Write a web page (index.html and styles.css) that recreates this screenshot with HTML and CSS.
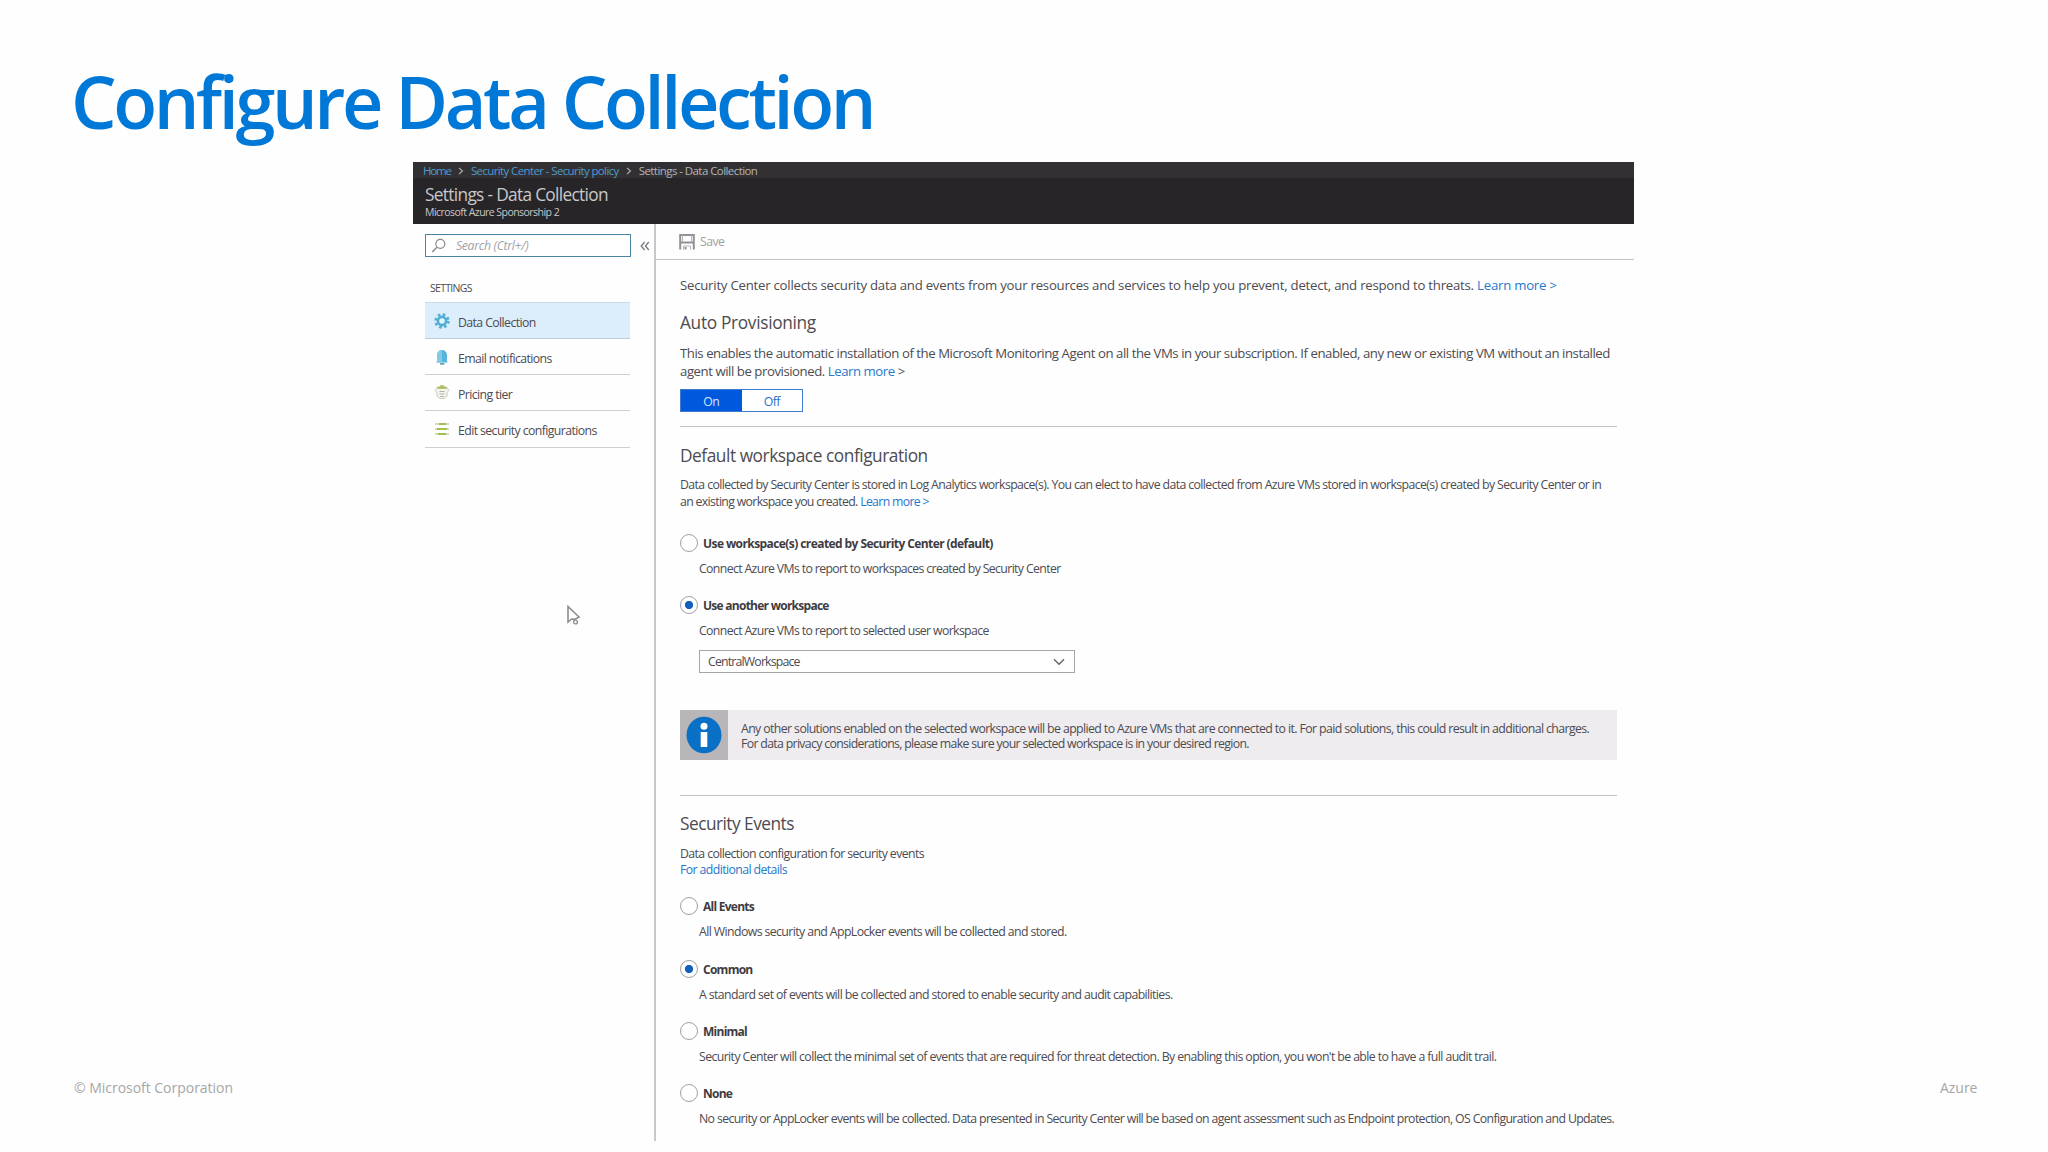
FILE: index.html
```html
<!DOCTYPE html>
<html lang="en">
<head>
    <meta charset="UTF-8">
    <meta name="viewport" content="width=device-width, initial-scale=1.0">
    <title>Configure Data Collection</title>
    <link rel="stylesheet" href="styles.css">
</head>
<body>
    <div class="slide">
        <h1 class="slide-title">Configure Data Collection</h1>
        <div class="slide-left">
            <svg class="cursor" width="16" height="22" viewBox="0 0 16 22">
                <path d="M2 1.5V17l3.6-3 3 .4L13 12z" fill="#fff" stroke="#8f8d92" stroke-width="1.6"/>
                <circle cx="9.5" cy="17" r="1.9" fill="#fff" stroke="#8f8d92" stroke-width="1.4"/>
            </svg>
            <span class="copyright">© Microsoft Corporation</span>
        </div>
        <div class="portal">
            <header class="portal-header">
                <nav class="breadcrumb">
                    <a class="crumb-home" href="#">Home</a>
                    <svg width="6" height="8" viewBox="0 0 6 8"><path d="M1 1l3.5 3L1 7" fill="none" stroke="#aaa" stroke-width="1.2"/></svg>
                    <a class="crumb-policy" href="#">Security Center - Security policy</a>
                    <svg width="6" height="8" viewBox="0 0 6 8"><path d="M1 1l3.5 3L1 7" fill="none" stroke="#aaa" stroke-width="1.2"/></svg>
                    <span>Settings - Data Collection</span>
                </nav>
                <div class="blade-title">Settings - Data Collection</div>
                <div class="blade-subtitle">Microsoft Azure Sponsorship 2</div>
            </header>
            <div class="portal-body">
                <aside class="sidebar">
                    <div class="search-row">
                        <div class="search-box">
                            <svg width="16" height="16" viewBox="0 0 16 16"><circle cx="9.3" cy="5.8" r="4.5" fill="none" stroke="#8a8a8e" stroke-width="1.2"/><path d="M6 9.2L1.2 14" stroke="#8a8a8e" stroke-width="1.5"/></svg>
                            <span>Search (Ctrl+/)</span>
                        </div>
                        <svg class="collapse" width="10" height="10" viewBox="0 0 10 10"><path d="M4.6 1L1.2 5l3.4 4M8.8 1L5.4 5l3.4 4" fill="none" stroke="#77767c" stroke-width="1.3"/></svg>
                    </div>
                    <div class="menu-heading">SETTINGS</div>
                    <ul class="menu">
                        <li class="active">
                            <svg width="16" height="16" viewBox="0 0 16 16"><circle cx="8" cy="8" r="6.4" fill="none" stroke="#52aed3" stroke-width="2.6" stroke-dasharray="2.6 2.43"/><circle cx="8" cy="8" r="4.1" fill="#e4f5fc" stroke="#4faed3" stroke-width="2.6"/></svg>
                            Data Collection
                        </li>
                        <li>
                            <svg width="16" height="16" viewBox="0 0 16 16"><path d="M3 12.5V6a5 5 0 0 1 10 0v6.5l1 1H2z" fill="#58b5da"/><path d="M8 1v12.5H3V6a5 5 0 0 1 5-5z" fill="#82cbe6"/><path d="M6 14.2h4.5v1.3H6z" fill="#3c87a8"/></svg>
                            Email notifications
                        </li>
                        <li>
                            <svg width="16" height="16" viewBox="0 0 16 16"><path d="M1 5.5L3.5 2h9L15 5.5l-2 2V11l-3 2.5H6L3 11V7.5z" fill="#f4f4ee" stroke="#c3c5b4" stroke-width=".9"/><path d="M3.5 2.8h9" stroke="#a5bd57" stroke-width="2"/><path d="M6.2 1h3.6" stroke="#a5bd57" stroke-width="1.6"/><path d="M5.5 6.5h5M5.5 9h5M6 11.5h4" stroke="#b5b4a6"/></svg>
                            Pricing tier
                        </li>
                        <li>
                            <svg width="16" height="16" viewBox="0 0 16 16"><path d="M1 3h14M1 8h14M1 13h14" stroke="#c8cfb6" stroke-width="1.6"/><path d="M5 3h7M3 8h10M4 13h8" stroke="#a0c04c" stroke-width="2.2"/></svg>
                            Edit security configurations
                        </li>
                    </ul>
                </aside>
                <main class="content">
                    <div class="toolbar">
                        <svg width="16" height="16" viewBox="0 0 16 16"><path d="M1.2 15.5V1h13.6v14.5M1.2 8.5h13.6" fill="none" stroke="#919095" stroke-width="2"/><path d="M3.5 1v7M12.5 1v7" stroke="#b5b4b9"/><path d="M4.5 15.5v-3.5h7v3.5" fill="none" stroke="#b5b4b9"/><path d="M5.5 13h2v2.5h-2z" fill="#919095"/></svg>
                        <span>Save</span>
                    </div>
                    <div class="settings">
                        <p class="intro">Security Center collects security data and events from your resources and services to help you prevent, detect, and respond to threats. <a href="#">Learn more &gt;</a></p>

                        <h2 class="h-auto">Auto Provisioning</h2>
                        <p class="auto-text">This enables the automatic installation of the Microsoft Monitoring Agent on all the VMs in your subscription. If enabled, any new or existing VM without an installed<br>agent will be provisioned. <a href="#">Learn more</a> &gt;</p>
                        <div class="toggle">
                            <span class="on">On</span>
                            <span>Off</span>
                        </div>
                        <hr>

                        <h2 class="h-workspace">Default workspace configuration</h2>
                        <p class="workspace-text">Data collected by Security Center is stored in Log Analytics workspace(s). You can elect to have data collected from Azure VMs stored in workspace(s) created by Security Center or in<br><span class="line-end">an existing workspace you created. <a href="#">Learn more &gt;</a></span></p>
                        <div class="options workspace-options">
                            <div class="option">
                                <div class="option-label"><i class="radio"></i><span>Use workspace(s) created by Security Center (default)</span></div>
                                <p>Connect Azure VMs to report to workspaces created by Security Center</p>
                            </div>
                            <div class="option">
                                <div class="option-label tight"><i class="radio checked"></i><span>Use another workspace</span></div>
                                <p>Connect Azure VMs to report to selected user workspace</p>
                            </div>
                        </div>
                        <div class="select">
                            <span>CentralWorkspace</span>
                            <svg width="12" height="8" viewBox="0 0 12 8"><path d="M1 1.2l5 5 5-5" fill="none" stroke="#66656b" stroke-width="1.5"/></svg>
                        </div>
                        <div class="info">
                            <div class="info-icon">
                                <svg width="36" height="38" viewBox="0 0 36 38"><ellipse cx="18" cy="19" rx="17.5" ry="18.3" fill="#0a70c6"/><circle cx="18" cy="10.3" r="3.5" fill="#fff"/><path d="M14.7 16h6.6v15h-6.6z" fill="#fff"/></svg>
                            </div>
                            <p>Any other solutions enabled on the selected workspace will be applied to Azure VMs that are connected to it. For paid solutions, this could result in additional charges.<br><span class="line-end">For data privacy considerations, please make sure your selected workspace is in your desired region.</span></p>
                        </div>
                        <hr class="hr-events">

                        <h2 class="h-events">Security Events</h2>
                        <p class="events-text">Data collection configuration for security events<br><a href="#">For additional details</a></p>
                        <div class="options">
                            <div class="option">
                                <div class="option-label tight"><i class="radio"></i><span>All Events</span></div>
                                <p class="events-option">All Windows security and AppLocker events will be collected and stored.</p>
                            </div>
                            <div class="option">
                                <div class="option-label tight"><i class="radio checked"></i><span>Common</span></div>
                                <p class="events-option">A standard set of events will be collected and stored to enable security and audit capabilities.</p>
                            </div>
                            <div class="option">
                                <div class="option-label tight"><i class="radio"></i><span>Minimal</span></div>
                                <p class="events-option">Security Center will collect the minimal set of events that are required for threat detection. By enabling this option, you won't be able to have a full audit trail.</p>
                            </div>
                            <div class="option">
                                <div class="option-label tight"><i class="radio"></i><span>None</span></div>
                                <p>No security or AppLocker events will be collected. Data presented in Security Center will be based on agent assessment such as Endpoint protection, OS Configuration and Updates.</p>
                            </div>
                        </div>
                    </div>
                </main>
            </div>
        </div>
        <div class="slide-right">Azure</div>
    </div>
</body>
</html>
```
FILE: styles.css
```css
* {
    box-sizing: border-box;
}
body {
    margin: 0;
    background-color: #fefefe;
    color: #4d4b50;
    font-family: 'Open Sans', 'Noto Sans', sans-serif;
    font-size: 12.3px;
    letter-spacing: -0.6px;
}
h1, h2, p, ul {
    margin: 0;
    padding: 0;
    font-weight: 400;
}
a {
    color: #2878cb;
    text-decoration: none;
}
svg {
    display: block;
    flex: none;
}

/* Slide */
.slide {
    display: grid;
    grid-template-columns: 413px 1221px 414px;
    grid-template-rows: 162px 990px;
    width: 2048px;
    height: 1152px;
    overflow: hidden;
    white-space: nowrap;
}
.slide-title {
    grid-column: 1 / 4;
    padding: 51px 0 0 71px;
    font-size: 72px;
    line-height: 100px;
    font-weight: 600;
    letter-spacing: -3.4px;
    color: #0078d7;
}
.slide-left,
.slide-right {
    font-size: 14px;
    line-height: 20px;
    letter-spacing: -0.03px;
    color: #a6a6a6;
}
.slide-left {
    position: relative;
    padding: 916px 0 0 74px;
}
.slide-right {
    padding-top: 916px;
    padding-left: 306px;
}
.cursor {
    position: absolute;
    left: 566px;
    top: 443px;
    z-index: 2;
}

/* Portal header */
.portal-header {
    height: 62px;
    background-color: #272528;
    color: #c9c8ca;
}
.breadcrumb {
    display: flex;
    align-items: center;
    height: 16px;
    padding: 2px 0 0 10px;
    background-color: #323032;
    font-size: 11.5px;
    line-height: 14px;
    letter-spacing: -0.57px;
    color: #b5b4b6;
}
.breadcrumb a {
    color: #4c9cd0;
}
.breadcrumb svg {
    margin: 0 7px;
}
.breadcrumb .crumb-home {
    letter-spacing: -1.15px;
}
.breadcrumb .crumb-policy {
    letter-spacing: -0.62px;
}
.blade-title {
    padding: 5px 0 0 12px;
    font-size: 17.3px;
    line-height: 24px;
    letter-spacing: -0.68px;
}
.blade-subtitle {
    padding-left: 12px;
    font-size: 10.5px;
    line-height: 11px;
    letter-spacing: -0.54px;
}
.portal-body {
    display: flex;
}

/* Sidebar */
.sidebar {
    width: 243px;
    height: 917px;
    padding: 10px 0 0 12px;
    border-right: 2px solid #c9c7ce;
}
.search-row {
    display: flex;
    align-items: center;
}
.search-box {
    display: flex;
    align-items: center;
    width: 206px;
    height: 23px;
    padding-left: 5px;
    border: 1.5px solid #4d84a3;
    background-color: #fff;
    color: #a3a2a7;
    font-style: italic;
}
.search-box span {
    margin-left: 9px;
    letter-spacing: -0.35px;
}
.collapse {
    margin-left: 9px;
}
.menu-heading {
    padding: 23px 0 0 5px;
    font-size: 10.5px;
    line-height: 16px;
    letter-spacing: -0.7px;
}
.menu {
    width: 205px;
    margin-top: 6px;
    list-style: none;
}
.menu li {
    display: flex;
    align-items: center;
    gap: 8px;
    height: 36.2px;
    padding: 3px 0 0 9px;
    border-bottom: 1px solid #d0ced4;
}
.menu li.active {
    height: 37px;
    background-color: #dceefb;
    border-top: 1px solid #cbd9e4;
    border-bottom-color: #b9cfdf;
}
.menu svg {
    margin-bottom: 3px;
}

/* Content */
.content {
    width: 978px;
}
.toolbar {
    display: flex;
    align-items: center;
    height: 36px;
    padding-left: 23px;
    border-bottom: 1px solid #c3c1c8;
    color: #a09fa4;
}
.toolbar span {
    margin-left: 5px;
    letter-spacing: -0.6px;
}
.settings {
    width: 961px;
    padding: 16px 0 0 24px;
}
.intro {
    font-size: 13.2px;
    line-height: 18px;
    letter-spacing: -0.23px;
}
h2 {
    font-size: 17.3px;
    line-height: 24px;
    letter-spacing: -0.45px;
}
.h-auto {
    margin-top: 17px;
    letter-spacing: -0.32px;
}
.auto-text {
    margin-top: 9px;
    font-size: 13.2px;
    line-height: 18px;
    letter-spacing: -0.45px;
}
.toggle {
    display: flex;
    width: 123px;
    height: 23px;
    margin-top: 9px;
    border: 1px solid #3f7cd0;
    background-color: #fff;
    line-height: 23px;
    text-align: center;
    color: #2a6fc4;
}
.toggle span {
    flex: 1;
}
.toggle .on {
    background-color: #0058dc;
    color: #d6e6ff;
}
hr {
    height: 1px;
    margin: 14px 0 0;
    border: none;
    background-color: #c3c1c8;
}
.h-workspace {
    margin-top: 17px;
}
.workspace-text {
    margin-top: 9px;
    line-height: 16.5px;
    letter-spacing: -0.605px;
}
.line-end {
    letter-spacing: -0.67px;
}
.options {
    margin-top: 19px;
}
.workspace-options {
    margin-top: 24px;
}
.option {
    line-height: 18px;
}
.option + .option {
    margin-top: 18.3px;
}
.option-label {
    display: flex;
    align-items: center;
    font-size: 12px;
    font-weight: 700;
    letter-spacing: -0.58px;
    color: #3e3c41;
}
.option-label span {
    padding-top: 1px;
    margin-bottom: -1px;
}
.option-label.tight {
    letter-spacing: -0.74px;
}
.option p {
    margin-top: 8px;
    padding-left: 19px;
    letter-spacing: -0.64px;
}
.option .events-option {
    letter-spacing: -0.6px;
}
.radio {
    width: 18px;
    height: 18px;
    margin-right: 5px;
    border: 1.5px solid #a09fa4;
    border-radius: 50%;
    background-color: #fff;
}
.radio.checked {
    background-image: radial-gradient(circle, #1160bd 3.7px, #fff 4.5px);
}
.select {
    display: flex;
    align-items: center;
    justify-content: space-between;
    width: 376px;
    height: 23px;
    margin: 10px 0 0 19px;
    padding: 0 9px 0 8px;
    border: 1px solid #a5a4aa;
    background-color: #fff;
    letter-spacing: -0.82px;
}
.info {
    display: flex;
    height: 50px;
    margin-top: 37px;
    background-color: #eeecef;
}
.info-icon {
    display: flex;
    align-items: center;
    justify-content: center;
    width: 48px;
    background-color: #b8b6b8;
}
.info p {
    padding: 11px 0 0 13px;
    line-height: 15px;
}
.hr-events {
    margin-top: 35px;
}
.h-events {
    margin-top: 15.5px;
    letter-spacing: -0.52px;
}
.events-text {
    margin-top: 10.5px;
    line-height: 16px;
}
```
